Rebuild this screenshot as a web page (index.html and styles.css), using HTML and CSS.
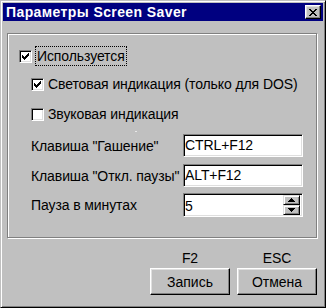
FILE: index.html
```html
<!DOCTYPE html>
<html lang="ru">
<head>
    <meta charset="UTF-8">
    <meta name="viewport" content="width=device-width, initial-scale=1.0">
    <title>Параметры Screen Saver</title>
    <link rel="stylesheet" href="styles.css">
</head>
<body>
    <div class="window">
        <div class="titlebar">
            <span class="title">Параметры Screen Saver</span>
            <span class="close-btn">
                <svg width="8" height="7" viewBox="0 0 8 7"><path d="M0 0h2v1H0zM6 0h2v1H6zM1 1h2v1H1zM5 1h2v1H5zM2 2h4v1H2zM3 3h2v1H3zM2 4h4v1H2zM1 5h2v1H1zM5 5h2v1H5zM0 6h2v1H0zM6 6h2v1H6z" fill="#000"/></svg>
            </span>
        </div>

        <div class="group">
            <span class="speck"></span>
            <div class="row row-main">
                <span class="check">
                    <svg width="7" height="7" viewBox="0 0 7 7"><path d="M6 0h1v1H6zM5 1h2v1H5zM0 2h1v1H0zM4 2h3v1H4zM0 3h2v1H0zM3 3h3v1H3zM0 4h5v1H0zM1 5h3v1H1zM2 6h1v1H2z" fill="#000"/></svg>
                </span>
                <span class="focus-label">Используется</span>
            </div>
            <div class="row row-sub row-light">
                <span class="check">
                    <svg width="7" height="7" viewBox="0 0 7 7"><path d="M6 0h1v1H6zM5 1h2v1H5zM0 2h1v1H0zM4 2h3v1H4zM0 3h2v1H0zM3 3h3v1H3zM0 4h5v1H0zM1 5h3v1H1zM2 6h1v1H2z" fill="#000"/></svg>
                </span>
                <span class="check-text">Световая индикация (только для DOS)</span>
            </div>
            <div class="row row-sub row-sound">
                <span class="check"></span>
                <span class="check-text">Звуковая индикация</span>
            </div>

            <div class="field-row field-first">
                <span class="field-label">Клавиша "Гашение"</span>
                <div class="edit">CTRL+F12</div>
            </div>
            <div class="field-row field-second">
                <span class="field-label">Клавиша "Откл. паузы"</span>
                <div class="edit">ALT+F12</div>
            </div>
            <div class="field-row field-third">
                <span class="field-label">Пауза в минутах</span>
                <div class="edit spin">
                    <span class="spin-value">5</span>
                    <div class="spin-btns">
                        <span class="spin-btn">
                            <svg width="7" height="4" viewBox="0 0 7 4"><path d="M3 0h1v1H3zM2 1h3v1H2zM1 2h5v1H1zM0 3h7v1H0z" fill="#000"/></svg>
                        </span>
                        <span class="spin-btn">
                            <svg width="7" height="4" viewBox="0 0 7 4"><path d="M0 0h7v1H0zM1 1h5v1H1zM2 2h3v1H2zM3 3h1v1H3z" fill="#000"/></svg>
                        </span>
                    </div>
                </div>
            </div>
        </div>

        <div class="footer">
            <div class="cmd">
                <span class="hotkey">F2</span>
                <button class="btn">Запись</button>
            </div>
            <div class="cmd">
                <span class="hotkey">ESC</span>
                <button class="btn">Отмена</button>
            </div>
        </div>
    </div>
</body>
</html>
```

FILE: styles.css
```css
body {
    margin: 0;
    background: #c0c0c0;
    font-family: 'Liberation Sans', Arial, sans-serif;
    font-size: 14px;
    letter-spacing: -0.1px;
    color: #000;
}
.window {
    width: 326px;
    height: 308px;
    box-sizing: border-box;
    border: 1px solid;
    border-color: #c0c0c0 #000 #000 #c0c0c0;
    box-shadow: inset 1px 1px #fff, inset -1px -1px #808080;
    padding: 2px;
    background: #c0c0c0;
}
.titlebar {
    height: 18px;
    background: #000080;
    color: #fff;
    display: flex;
    align-items: center;
    justify-content: space-between;
    padding: 0 2px 0 3px;
}
.title {
    font-weight: bold;
    letter-spacing: 0.4px;
    line-height: 18px;
}
.close-btn {
    width: 16px;
    height: 14px;
    box-sizing: border-box;
    background: #c0c0c0;
    border: 1px solid;
    border-color: #fff #000 #000 #fff;
    box-shadow: inset -1px -1px #808080, inset 1px 1px #dfdfdf;
    display: flex;
    align-items: center;
    justify-content: center;
}
.close-btn svg {
    display: block;
}

/* group frame */
.group {
    position: relative;
    margin: 12px 6px 0 4px;
    border: 1px solid #808080;
    box-shadow: inset 1px 1px #fff, 1px 1px #fff;
    padding: 12px 0 20px 11px;
}
.speck {
    position: absolute;
    left: 127px;
    top: 97px;
    width: 2px;
    height: 1px;
    background: #e8e8e8;
}
.row {
    display: flex;
    align-items: center;
    height: 20px;
}
.row-sub {
    margin-left: 12px;
}
.row-light {
    margin-top: 8px;
}
.row-sound {
    margin-top: 10px;
}
.check {
    width: 13px;
    height: 13px;
    box-sizing: border-box;
    background: #fff;
    border: 1px solid;
    border-color: #808080 #fff #fff #808080;
    box-shadow: inset 1px 1px #000, inset -1px -1px #dfdfdf;
    display: flex;
    align-items: center;
    justify-content: center;
    flex-shrink: 0;
}
.check svg {
    display: block;
}
.focus-label {
    margin-left: 3px;
    height: 20px;
    box-sizing: border-box;
    border: 1px dotted #000;
    padding: 0 1px;
    line-height: 18px;
}
.check-text {
    margin-left: 4px;
    line-height: 20px;
}

/* edit fields */
.field-row {
    display: flex;
    align-items: center;
    margin-left: 12px;
}
.field-first {
    margin-top: 10px;
}
.field-second {
    margin-top: 7px;
}
.field-third {
    margin-top: 6px;
}
.field-label {
    width: 152px;
    white-space: nowrap;
}
.edit {
    width: 120px;
    height: 23px;
    box-sizing: border-box;
    background: #fff;
    border: 1px solid;
    border-color: #808080 #fff #fff #808080;
    box-shadow: inset 1px 1px #000, inset -1px -1px #dfdfdf;
    padding-left: 1px;
    line-height: 21px;
}
.spin {
    height: 24px;
    display: flex;
    justify-content: space-between;
    line-height: 22px;
    padding: 1px 2px 1px 1px;
}
.spin-btns {
    display: flex;
    flex-direction: column;
    width: 17px;
}
.spin-btn {
    flex: 1;
    box-sizing: border-box;
    background: #c0c0c0;
    border: 1px solid;
    border-color: #dfdfdf #000 #000 #dfdfdf;
    box-shadow: inset 1px 1px #fff, inset -1px -1px #808080;
    display: flex;
    align-items: center;
    justify-content: center;
}
.spin-btn svg {
    display: block;
}

/* buttons */
.footer {
    display: flex;
    justify-content: flex-end;
    gap: 7px;
    margin: 12px 6px 0 0;
}
.cmd {
    display: flex;
    flex-direction: column;
    align-items: center;
}
.hotkey {
    height: 16px;
    line-height: 16px;
    margin-bottom: 2px;
}
.btn {
    width: 80px;
    height: 27px;
    padding: 0;
    font: inherit;
    color: #000;
    background: #c0c0c0;
    border: 1px solid;
    border-color: #fff #000 #000 #fff;
    box-shadow: inset -1px -1px #808080, inset 1px 1px #dfdfdf;
}
```
